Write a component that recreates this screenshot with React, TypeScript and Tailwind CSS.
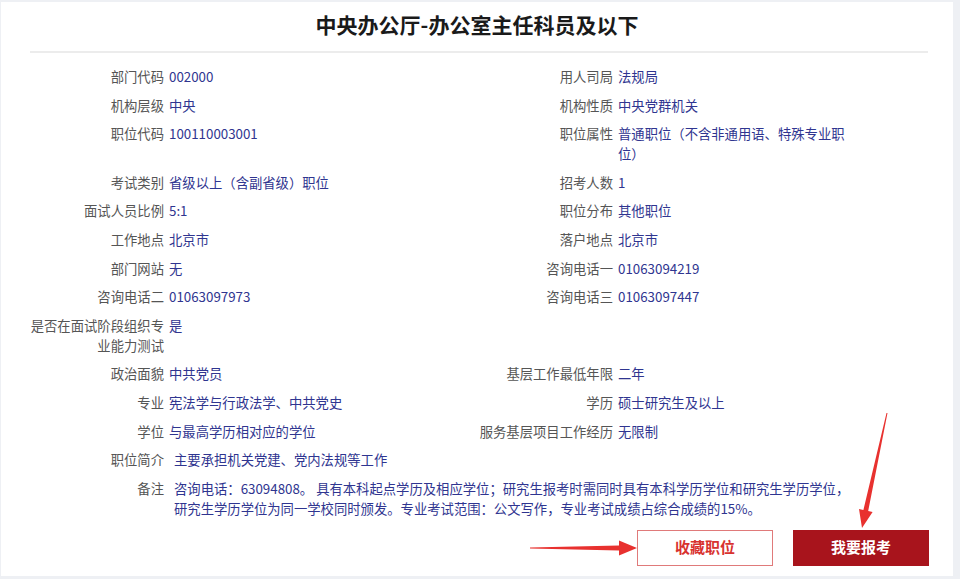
import React from "react";

type Item = { label: string; value: React.ReactNode; pad?: boolean };

const rows: [Item, Item | null][] = [
  [{ label: "部门代码", value: "002000" }, { label: "用人司局", value: "法规局" }],
  [{ label: "机构层级", value: "中央" }, { label: "机构性质", value: "中央党群机关" }],
  [
    { label: "职位代码", value: "100110003001" },
    { label: "职位属性", value: "普通职位（不含非通用语、特殊专业职位）" },
  ],
  [{ label: "考试类别", value: "省级以上（含副省级）职位" }, { label: "招考人数", value: "1" }],
  [{ label: "面试人员比例", value: "5:1" }, { label: "职位分布", value: "其他职位" }],
  [{ label: "工作地点", value: "北京市" }, { label: "落户地点", value: "北京市" }],
  [{ label: "部门网站", value: "无" }, { label: "咨询电话一", value: "01063094219" }],
  [{ label: "咨询电话二", value: "01063097973" }, { label: "咨询电话三", value: "01063097447" }],
  [{ label: "是否在面试阶段组织专业能力测试", value: "是" }, null],
  [{ label: "政治面貌", value: "中共党员" }, { label: "基层工作最低年限", value: "二年" }],
  [{ label: "专业", value: "宪法学与行政法学、中共党史" }, { label: "学历", value: "硕士研究生及以上" }],
  [{ label: "学位", value: "与最高学历相对应的学位" }, { label: "服务基层项目工作经历", value: "无限制" }],
];

function Field({ item }: { item: Item | null }) {
  if (!item) return <div />;
  return (
    <div className="flex items-start">
      <div className="w-[134px] shrink-0 text-right text-[#555555]">{item.label}</div>
      <div className="ml-[5px] w-[234px] text-[#2f3590]">{item.value}</div>
    </div>
  );
}

export default function App() {
  return (
    <div
      className="relative h-[579px] w-[960px] overflow-hidden bg-[#eef0f4]"
      style={{ fontFamily: '"Noto Sans CJK SC", "Noto Sans", sans-serif' }}
    >
      <div className="ml-[1px] mt-[2px] h-[574px] w-[952px] bg-white">
        <div className="pt-[9px] text-center text-[21px] font-bold leading-[26px] text-[#1a1a1a]">
          中央办公厅-办公室主任科员及以下
        </div>
        <div className="ml-[29px] mt-[14px] h-[2px] w-[898px] bg-[#ececec]" />
        <div className="ml-[29px] mt-[14px] w-[898px] text-[13.33px] leading-[20px]">
          <div className="grid grid-cols-[449px_449px] gap-y-[8.6px]">
            {rows.map(([l, r], i) => (
              <React.Fragment key={i}>
                <Field item={l} />
                <Field item={r} />
              </React.Fragment>
            ))}
            <div className="col-span-2 flex items-start">
              <div className="w-[134px] shrink-0 text-right text-[#555555]">职位简介</div>
              <div className="ml-[10px] text-[#2f3590]">主要承担机关党建、党内法规等工作</div>
            </div>
            <div className="col-span-2 flex items-start">
              <div className="w-[134px] shrink-0 text-right text-[#555555]">备注</div>
              <div className="ml-[10px] w-[700px] text-[#2f3590]">
                咨询电话：63094808。 具有本科起点学历及相应学位；研究生报考时需同时具有本科学历学位和研究生学历学位，
                <br />
                研究生学历学位为同一学校同时颁发。专业考试范围：公文写作，专业考试成绩占综合成绩的15%。
              </div>
            </div>
          </div>
        </div>
        <div className="mt-[11px] flex justify-end gap-[20px] pr-[24px]">
          <button className="flex h-[36px] w-[136px] items-center justify-center border border-[#e07a7a] bg-white text-[15px] font-bold text-[#d8322f]">
            收藏职位
          </button>
          <button className="flex h-[36px] w-[136px] items-center justify-center bg-[#a8141c] text-[15px] font-bold text-white">
            我要报考
          </button>
        </div>
      </div>
      <svg
        className="pointer-events-none absolute left-0 top-0"
        width="960"
        height="579"
        viewBox="0 0 960 579"
      >
        <polygon
          fill="#e8312f"
          points="530,547.6 619,545.5 619,540.5 637,548 619,555.5 619,550.5 530,548.4"
        />
        <polygon
          fill="#e8312f"
          points="887.5,413.1 868.2,510.9 872.6,511.9 862,528 859,508.9 863.4,509.9 886.5,412.9"
        />
      </svg>
    </div>
  );
}
